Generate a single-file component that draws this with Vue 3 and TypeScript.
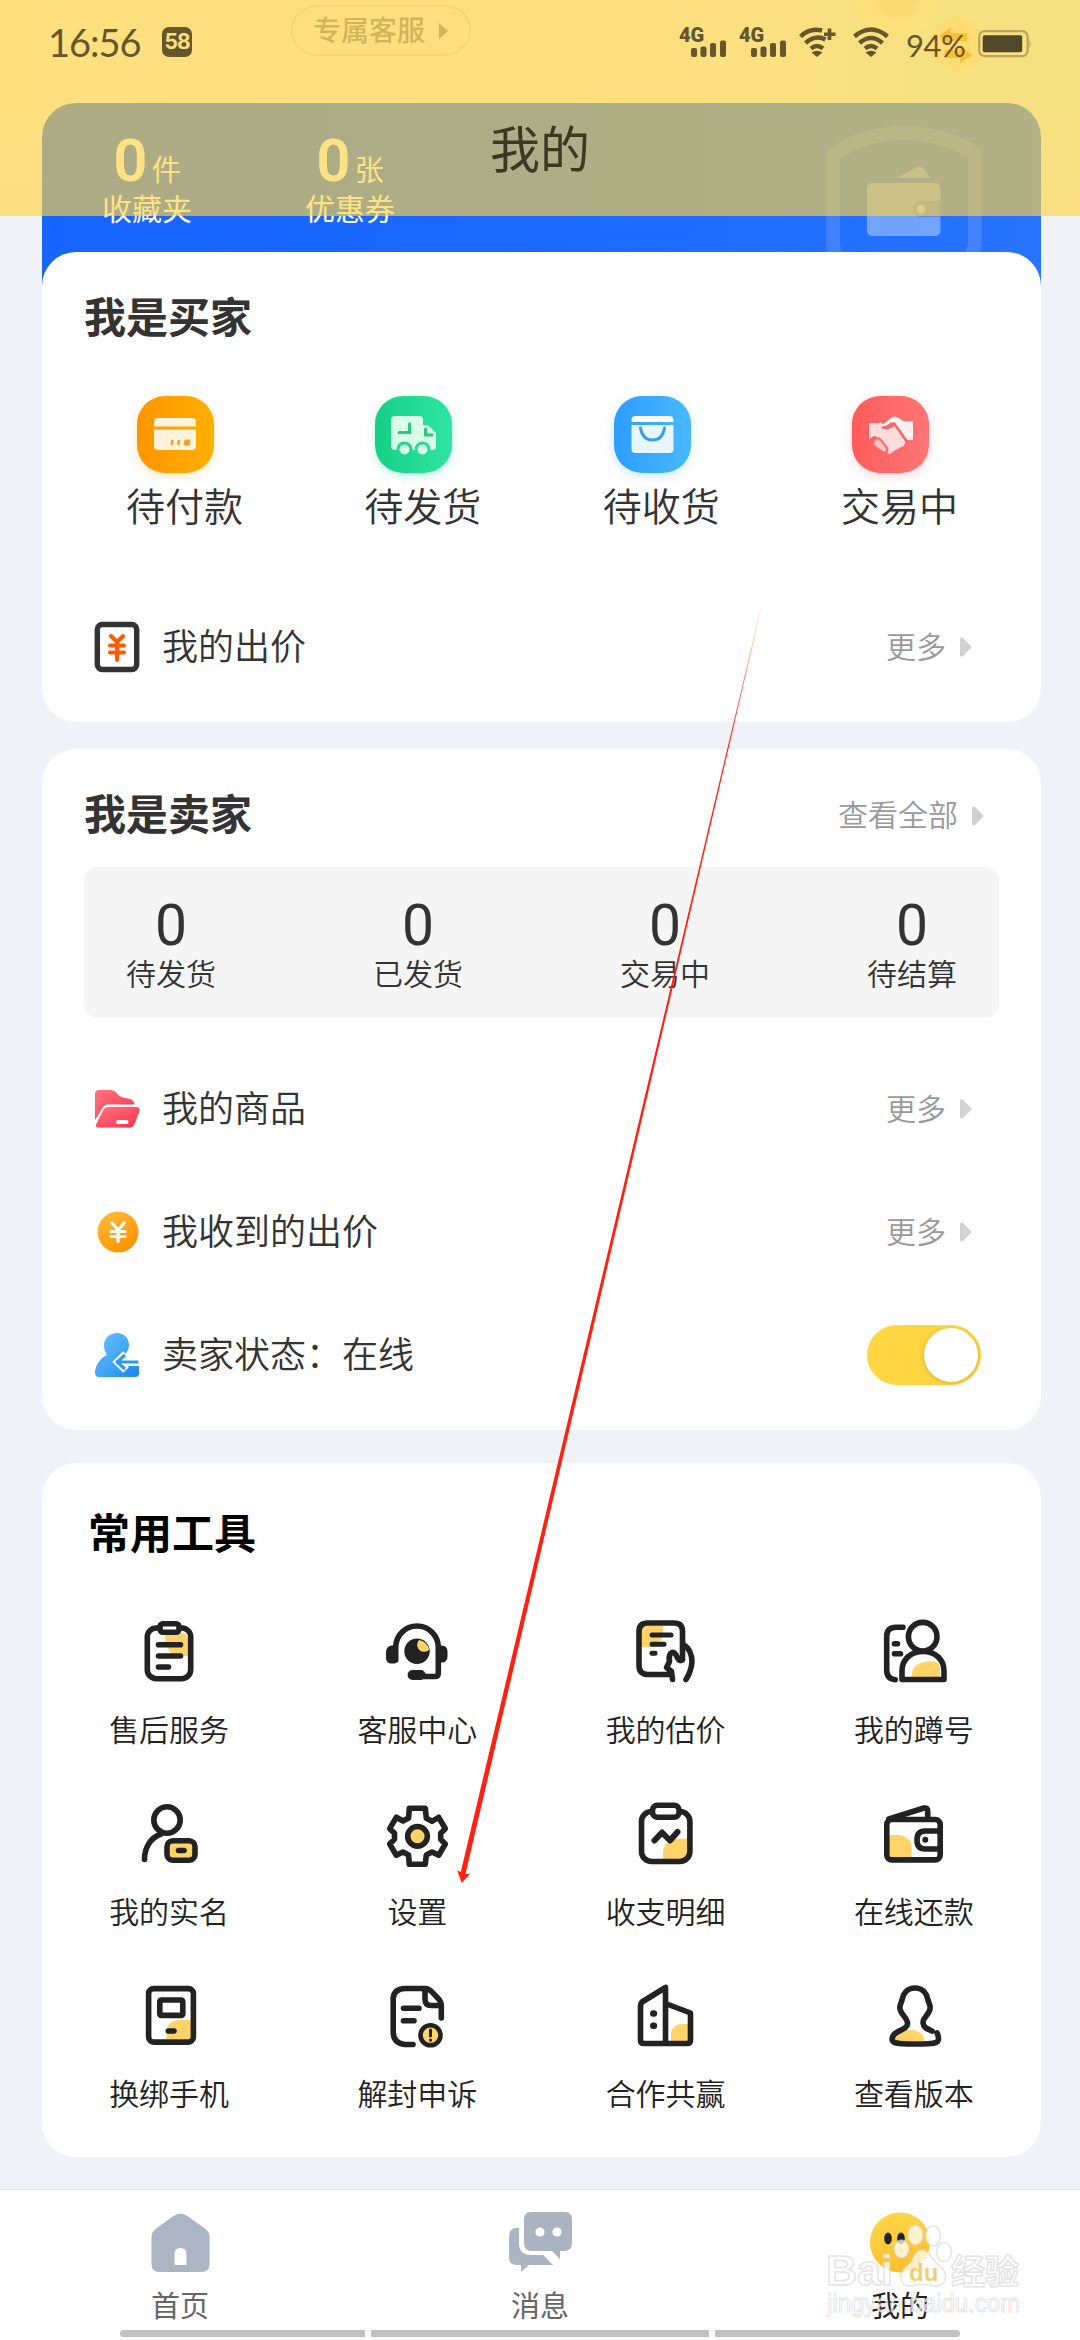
<script setup lang="ts">
interface Labeled {
  key: string
  label: string
}

const assets = [
  { value: 0, unit: '件', label: '收藏夹' },
  { value: 0, unit: '张', label: '优惠券' },
]

const orders: Labeled[] = [
  { key: 'pay', label: '待付款' },
  { key: 'ship', label: '待发货' },
  { key: 'receive', label: '待收货' },
  { key: 'deal', label: '交易中' },
]

const sellerStats = [
  { value: 0, label: '待发货' },
  { value: 0, label: '已发货' },
  { value: 0, label: '交易中' },
  { value: 0, label: '待结算' },
]

const tools: Labeled[] = [
  { key: 'after', label: '售后服务' },
  { key: 'service', label: '客服中心' },
  { key: 'estimate', label: '我的估价' },
  { key: 'account', label: '我的蹲号' },
  { key: 'realname', label: '我的实名' },
  { key: 'settings', label: '设置' },
  { key: 'bill', label: '收支明细' },
  { key: 'repay', label: '在线还款' },
  { key: 'phone', label: '换绑手机' },
  { key: 'appeal', label: '解封申诉' },
  { key: 'coop', label: '合作共赢' },
  { key: 'version', label: '查看版本' },
]

const signalBars = [
  { x: 12, h: 9 },
  { x: 21.5, h: 10.5 },
  { x: 31, h: 14 },
  { x: 41, h: 16.5 },
]
</script>

<template>
  <div class="screen">
    <header class="hero">
      <svg class="hero-coins" width="180" height="90" viewBox="0 0 180 90">
        <circle cx="58" cy="-8" r="44" fill="#fff6d8" opacity=".7" />
        <circle cx="58" cy="-2" r="22" fill="#efe4c0" opacity=".6" />
        <circle cx="117" cy="44" r="27" fill="#fff3cd" />
        <path d="M99 36l12-9v6h16v8h-16v5zM132 55l-12 8v-5h-15v-8h15v-5z" fill="#ff9c1a" />
      </svg>
      <div class="service-pill">
        <span>专属客服</span>
        <svg width="9" height="16" viewBox="0 0 9 16"><path d="M0 0l9 8-9 8z" fill="#7d7f80" /></svg>
      </div>
      <div class="wallet">
        <div v-for="a in assets" :key="a.label" class="asset">
          <div class="asset-value"><b>{{ a.value }}</b><span>{{ a.unit }}</span></div>
          <div class="asset-label">{{ a.label }}</div>
        </div>
        <svg class="shield" width="180" height="150" viewBox="815 115 180 150">
          <path d="M850 285Q833 262 833 240V154Q866 133 903.500 133T975 153V240Q974 262 950 280" fill="none" stroke="#fff" stroke-opacity=".13" stroke-width="14" />
          <path d="M897 178l20-11q4-2 7 2l6 9z" fill="#fff" fill-opacity=".33" />
          <rect x="867" y="183" width="73.500" height="53" rx="5" fill="#fff" fill-opacity=".36" />
          <path d="M941 201h-20q-8 0-8 8t8 8h20z" fill="#1c58d8" fill-opacity=".35" />
          <circle cx="921" cy="209" r="4.500" fill="#fff" fill-opacity=".5" />
        </svg>
      </div>
    </header>

    <section class="card buyer">
      <h2>我是买家</h2>
      <div class="orders">
        <div v-for="o in orders" :key="o.key" class="order">
          <div class="order-icon" :class="o.key">
            <svg v-if="o.key === 'pay'" width="77" height="77" viewBox="0 0 77 77">
              <path d="M17 30.500V26q0-4 4-4h34q4 0 4 4v4.500z" fill="#fff3dc" />
              <path d="M17 33.500h42V50q0 4-4 4H21q-4 0-4-4z" fill="#fff3e0" />
              <path d="M35.500 44l-1 5M42 44l-1 5" stroke="#f9a11b" stroke-width="2.600" />
              <path d="M47.500 43.500h6l-1 6h-6z" fill="#f9a11b" />
            </svg>
            <svg v-else-if="o.key === 'ship'" width="77" height="77" viewBox="0 0 77 77">
              <path d="M20 20h24q4 0 4 4v5h5l8 8v14q0 3-4 3H20q-4 0-4-4V24q0-4 4-4z" fill="#d9ffe6" />
              <path d="M24 36.500h10.500V28M50.500 33v6h6.500" fill="none" stroke="#25c888" stroke-width="3" stroke-linecap="round" />
              <circle cx="29.500" cy="53.500" r="6.500" fill="#d9ffe6" stroke="#1fd592" stroke-width="3" />
              <circle cx="47.500" cy="53.500" r="6.500" fill="#d9ffe6" stroke="#25dc99" stroke-width="3" />
            </svg>
            <svg v-else-if="o.key === 'receive'" width="77" height="77" viewBox="0 0 77 77">
              <path d="M17.500 26v-2q0-4 4-4H55q4.500 0 4.500 4v2z" fill="#fff" />
              <path d="M17.500 29h42v24q0 4-4 4h-34q-4 0-4-4z" fill="#e8f5ff" />
              <path d="M26.500 32q2 12 12 12t12-12" fill="none" stroke="#389fe8" stroke-width="3" stroke-linecap="round" />
            </svg>
            <svg v-else width="77" height="77" viewBox="0 0 77 77">
              <path d="M17 27h9.500q2-1 4 0c-3 5 1 8 7 4q4-2 6-1l10 16-2 4q-9 4-13 7.500-2 1-5-1.500L25 41q-3-3-8 3z" fill="#ffdcdc" />
              <path d="M28 30q6-4 11-8 4-3 8 0 3 3 6 3.500h8V44h-6.500L43 27q-3-2-7 1.500-5 3.500-8 1.500z" fill="#fff1f1" />
              <path d="M30.500 31q5 3 12-3L55 45.500" fill="none" stroke="#f96468" stroke-width="2.400" />
              <path d="M23 43q3-2 6 1l6 8q1 3-1 5-5-1-12-7-2-4 1-7z" fill="#ffc2c2" stroke="#ff6668" stroke-width="2" />
            </svg>
          </div>
          <span>{{ o.label }}</span>
        </div>
      </div>
      <div class="row">
        <svg class="row-icon" width="48" height="54" viewBox="0 0 48 54">
          <rect x="4.300" y="4.500" width="39.400" height="45" rx="5" fill="#fff" stroke="#333" stroke-width="5.400" />
          <path d="M18 16l6 6 6-6M24 22v18M17 25.500h14M17 32.500h14" fill="none" stroke="#ff5900" stroke-width="4" stroke-linecap="round" />
        </svg>
        <span class="row-label">我的出价</span>
        <span class="more">更多</span>
        <svg class="caret" width="12" height="20" viewBox="0 0 12 20"><path d="M0 1.500Q1.500-.5 3 1l8 8q1 1 0 2l-8 8q-1.500 1.500-3-.5z" fill="#d2d2d2" /></svg>
      </div>
    </section>

    <section class="card seller">
      <div class="head">
        <h2>我是卖家</h2>
        <span class="more">查看全部</span>
        <svg class="caret" width="12" height="20" viewBox="0 0 12 20"><path d="M0 1.500Q1.500-.5 3 1l8 8q1 1 0 2l-8 8q-1.500 1.500-3-.5z" fill="#d2d2d2" /></svg>
      </div>
      <div class="stats">
        <div v-for="s in sellerStats" :key="s.label" class="stat">
          <b>{{ s.value }}</b>
          <span>{{ s.label }}</span>
        </div>
      </div>
      <div class="row">
        <svg class="row-icon" width="48" height="54" viewBox="0 0 48 54">
          <defs>
            <linearGradient id="folder" x1="0" y1="0" x2="1" y2="1"><stop offset="0" stop-color="#ff7582" /><stop offset="1" stop-color="#ff3049" /></linearGradient>
          </defs>
          <path d="M2 38V12q0-4 4-4h12q3 0 5 2.500 3 4 7 5l7 1.500q4 1 4.500 5.500H15q-4 0-5.500 3.500z" fill="url(#folder)" />
          <path d="M15 25h28q4.500 0 3.500 4l-5 13q-1.500 3.500-5 3.500H5q-3 0-2-3L10 28.500Q11.500 25 15 25z" fill="url(#folder)" />
          <rect x="23" y="38" width="12.500" height="4" rx="2" fill="#fff" />
        </svg>
        <span class="row-label">我的商品</span>
        <span class="more">更多</span>
        <svg class="caret" width="12" height="20" viewBox="0 0 12 20"><path d="M0 1.500Q1.500-.5 3 1l8 8q1 1 0 2l-8 8q-1.500 1.500-3-.5z" fill="#d2d2d2" /></svg>
      </div>
      <div class="row">
        <svg class="row-icon" width="48" height="54" viewBox="0 0 48 54">
          <defs>
            <linearGradient id="coin" x1="0" y1="0" x2=".6" y2="1"><stop offset="0" stop-color="#ffbd3e" /><stop offset="1" stop-color="#ff9400" /></linearGradient>
          </defs>
          <circle cx="25" cy="27" r="20.500" fill="url(#coin)" />
          <path d="M19 18l6 7 6-7M25 25v11.500M18 26.500h14M18 31.500h14" fill="none" stroke="#fff" stroke-width="3.200" stroke-linecap="round" />
        </svg>
        <span class="row-label">我收到的出价</span>
        <span class="more">更多</span>
        <svg class="caret" width="12" height="20" viewBox="0 0 12 20"><path d="M0 1.500Q1.500-.5 3 1l8 8q1 1 0 2l-8 8q-1.500 1.500-3-.5z" fill="#d2d2d2" /></svg>
      </div>
      <div class="row">
        <svg class="row-icon" width="48" height="54" viewBox="0 0 48 54">
          <defs>
            <linearGradient id="user" x1="0" y1="0" x2="1" y2="1"><stop offset="0" stop-color="#6cc6ff" /><stop offset="1" stop-color="#1b88ea" /></linearGradient>
          </defs>
          <path d="M24 5c7 0 12 5.500 12 12 0 4-2 7-4 9l2 6h12v13q0 4-4 4H6q-4 0-4-4c0-7 5-15 12-18-2-3-3-6-3-10C11 10.500 17 5 24 5z" fill="url(#user)" />
          <path d="M33 26l-8 8 8 8M26 34h21" fill="none" stroke="#fff" stroke-width="8" />
          <path d="M32 27l-8 7 8 7M25 34h20.500" fill="none" stroke="#2d9bf0" stroke-width="3.200" stroke-linejoin="round" />
        </svg>
        <span class="row-label">卖家状态：在线</span>
        <span class="switch"><i></i></span>
      </div>
    </section>

    <section class="card tools">
      <h2>常用工具</h2>
      <div class="tool-grid">
        <div v-for="t in tools" :key="t.key" class="tool">
          <svg class="tool-icon" width="66" height="66" viewBox="0 0 66 66">
            <g v-if="t.key === 'after'">
              <path d="M29 15h16q7 0 7 7v16H40Q29 34 29 15z" class="y" />
              <rect x="11.300" y="10" width="43.400" height="50.700" rx="9" />
              <rect x="24" y="5.700" width="19" height="8.600" rx="3" fill="#fff" />
              <path d="M22.500 26.700h22M22.500 38h22M22.500 49h10" />
            </g>
            <g v-else-if="t.key === 'service'">
              <path d="M11.700 42V29.300a21.300 21.300 0 0 1 42.600 0V55q0 3.500-3.500 3.500H30" />
              <path d="M13.500 27.500v14q0 4-3.500 4H7.500q-5.500 0-5.500-6v-5q0-6 5.500-7zM53 27.500v17h4.500q6 0 6-6v-5q0-6-6-6z" class="k" />
              <rect x="23.600" y="52" width="18" height="10" rx="5" class="k" />
              <circle cx="33" cy="33.300" r="12.700" class="k" />
              <path d="M35 22a6.400 6.400 0 1 0 10.300 9.500Q43.500 24 35 22z" class="y" />
            </g>
            <g v-else-if="t.key === 'estimate'">
              <path d="M8 8h22v4q0 12-9 17H8z" class="y" />
              <path d="M38 56.500H15q-9 0-9-9V13.500q0-8.500 9-8.500h26q8.500 0 8.500 8.500V42q-3 2-5-2-3-8-7-4.500-2 3-1 8l-3 6 5 4 1 8" />
              <path d="M50 26q9 6 9 18-1 10-6 17.500" />
              <path d="M19 17h19M19 26.300h12M19 35.300h3" stroke-width="5" />
            </g>
            <g v-else-if="t.key === 'account'">
              <path d="M31 58.700q-1-13 13.500-15T59 50v9z" class="y" />
              <path d="M22 9.300h-7q-9.300 0-9.300 9V52q0 9 8.500 9.700M13.500 25.700h3M13.500 35.700h6" />
              <circle cx="41.700" cy="18.700" r="14.300" />
              <path d="M21 61.500V53c0-11 8-19.500 21-19.500S63 42 63 53v8.500z" />
            </g>
            <g v-else-if="t.key === 'realname'">
              <circle cx="31" cy="20" r="13.200" />
              <path d="M25 34C14 38 8.500 48 8.500 59.500" />
              <rect x="31" y="40.700" width="28" height="19.600" rx="6" fill="#ffd368" />
              <path d="M42.500 50.500h5.500" />
            </g>
            <g v-else-if="t.key === 'settings'" transform="translate(0 3)">
              <path d="M25.300 5.300h16l1 10 5.700 3 6.700-4 6.600 11.400-4.600 4.600v6l4.600 4.700-6.600 11.300-6.700-3.300-5.700 3-1 9.300h-16l-.7-9.300-5.600-3-6.700 3.300L5.700 41l4.800-4.700v-6l-4.800-4.600 6.600-11.400 6.700 3.700 5.600-3z" />
              <circle cx="33.500" cy="33.300" r="9.800" fill="#ffd368" />
            </g>
            <g v-else-if="t.key === 'bill'" transform="translate(0 3)">
              <path d="M30 56V47q3-11 15-11.300h10V56z" class="y" />
              <rect x="8.500" y="8.500" width="48.400" height="50" rx="10" />
              <rect x="19.500" y="2.200" width="26.600" height="12" rx="5" fill="#fff" />
              <path d="M21.500 37.500l7.500-8 8 8 7.500-8.500" stroke-width="6" />
            </g>
            <g v-else-if="t.key === 'repay'" transform="translate(0 3)">
              <path d="M8 32h10q12 2 12.700 12v11H8z" class="y" />
              <rect x="5.800" y="16.500" width="53.400" height="40.400" rx="5" />
              <path d="M8 16L43 5q3.700-.5 3.700 3v8M59 28H44q-8 0-8 9t8 9h15" />
              <circle cx="44.300" cy="36.700" r="3" class="k" />
            </g>
            <g v-else-if="t.key === 'phone'">
              <path d="M30.300 57V52q0-14 14-14H55v19z" class="y" />
              <rect x="12.600" y="6.600" width="44.800" height="53.500" rx="5" />
              <rect x="23.800" y="18" width="23" height="15.400" rx="1.500" fill="#fff" />
              <path d="M32.300 49H38" />
            </g>
            <g v-else-if="t.key === 'appeal'">
              <path d="M29 62.500h-8Q9.200 61 9.200 50V16Q10 7 21 6.500h20q4 0 8 4.500l6.500 7q2 3 1.800 6v12M41 8v9q0 6.500 6 6.500h9M19.500 26.300h15.500M19.500 38.700H30" />
              <circle cx="46.500" cy="53.300" r="10" fill="#ffd368" stroke-width="4.600" />
              <path d="M46.500 48v6M46.500 58v.2" stroke-width="3" />
            </g>
            <g v-else-if="t.key === 'coop'">
              <path d="M38 59V50q3-8 11-8h7v17z" class="y" />
              <path d="M11 61.500q-3.500 0-3.500-3.500V24q0-2 1.500-4L32.500 5.500v56zM32.500 21.500L57.500 31v27q0 3.500-3.500 3.500H11" />
              <path d="M20.300 31.500h.6M20.300 43.700h.6" stroke-width="6.500" />
            </g>
            <g v-else>
              <path d="M14 59q-1-5 3-8 11-6 21-1 6 4 5 9z" class="y" />
              <path d="M51 49c-4-2-8.500-3-9-8-.5-5 6-8 7-14 .7-4-1-5-2-9C46 12 42 6 34 6s-12 6-13 12c-1 4-2.700 5-2 9 1 6 8 9 7.500 15-.5 7-15 6-15.500 15 0 4 3 5 23 5s23.500-1 23.500-5q0-4-1.500-6" />
            </g>
          </svg>
          <span>{{ t.label }}</span>
        </div>
      </div>
    </section>

    <nav class="tabbar">
      <div class="tab">
        <svg width="66" height="64" viewBox="0 0 66 64">
          <path d="M4 25q0-5 4-8L26 4q7-5 14 0l18 13q4 3 4 8v27q0 8-8 8H12q-8 0-8-8z" fill="#abb5c3" transform="translate(.5 1)" />
          <path d="M27.500 54V43q0-6 6-6t6 6v11z" fill="#fff" />
        </svg>
        <span>首页</span>
      </div>
      <div class="tab">
        <svg width="66" height="64" viewBox="0 0 66 64">
          <path d="M8 17q-6 1-6 9v20q0 8 8 8h4v7l8-7h24L36 44H24q-12 0-12-12V17z" fill="#a9b5c2" />
          <path d="M24 1h34q7 0 7 8v23q0 8-8 8h-4v8l-8-8H25q-8 0-8-8V9q0-8 7-8z" fill="#abb3c0" />
          <circle cx="33" cy="21" r="4.600" fill="#fff" /><circle cx="50" cy="21" r="4.600" fill="#fff" />
        </svg>
        <span>消息</span>
      </div>
      <div class="tab active">
        <svg width="66" height="64" viewBox="0 0 66 64">
          <defs>
            <linearGradient id="face" x1="0" y1="0" x2=".3" y2="1"><stop offset="0" stop-color="#ffd94a" /><stop offset="1" stop-color="#fdc02b" /></linearGradient>
          </defs>
          <circle cx="33" cy="31.500" r="30" fill="url(#face)" />
          <ellipse cx="21" cy="27.500" rx="3.800" ry="6" fill="#222" /><ellipse cx="34" cy="27.500" rx="3.800" ry="6" fill="#222" />
        </svg>
        <span>我的</span>
      </div>
    </nav>
    <div class="gesture"><i></i><i class="wide"></i><i></i></div>

    <div class="topbar">
      <div class="status">
        <span class="time">16:56</span>
        <span class="badge">58</span>
        <span class="spacer"></span>
        <svg v-for="n in 2" :key="n" class="signal" width="47" height="30" viewBox="0 0 47 30">
          <text x="0" y="15" class="net">4G</text>
          <rect v-for="b in signalBars" :key="b.x" :x="b.x" :y="30 - b.h" width="6" :height="b.h" rx="2" fill="#65562b" />
        </svg>
        <svg class="wifi-plus" width="37" height="30" viewBox="0 0 37 30">
          <path d="M1.500 9.500Q11 .5 23 3.500M6.500 16q10-9 20-3.500M12 21.500q6-5 12 0" fill="none" stroke="#65562b" stroke-width="4.400" />
          <path d="M12.500 25.500q5.500-3.500 11 0L18 30z" fill="#65562b" />
          <path d="M30.500 1.500v11.500M25 7.200h11.500" stroke="#65562b" stroke-width="3.600" />
        </svg>
        <svg class="wifi" width="36" height="30" viewBox="0 0 36 30">
          <path d="M1.500 9.500q16.500-14 33 0M6.500 16q11.500-10 23 0M12 21.500q6-5 12 0" fill="none" stroke="#65562b" stroke-width="4.400" />
          <path d="M12.500 25.500q5.500-3.500 11 0L18 30z" fill="#65562b" />
        </svg>
        <span class="percent">94%</span>
        <svg class="battery" width="54" height="28" viewBox="0 0 54 28">
          <rect x="1.200" y="1.200" width="48.500" height="25" rx="5.500" fill="none" stroke="#b7a461" stroke-width="2.200" />
          <rect x="4.700" y="5.200" width="39.500" height="17" rx="2" fill="#51482a" />
          <path d="M51.500 9.500q2.300 4 0 8.500z" fill="#b7a461" />
        </svg>
      </div>
      <h1>我的</h1>
    </div>

    <svg class="pointer" width="320" height="1290" viewBox="450 600 320 1290">
      <defs>
        <linearGradient id="fade" gradientUnits="userSpaceOnUse" x1="761" y1="608" x2="730" y2="745"><stop offset="0" stop-color="#ff2010" stop-opacity=".1" /><stop offset="1" stop-color="#ff2010" /></linearGradient>
      </defs>
      <path d="M760.700 608L460.800 1872l-3.600-1.500 4.500 12.500 8.500-9.500-4.800.8L761.400 608z" fill="url(#fade)" />
    </svg>

    <svg class="watermark" width="210" height="110" viewBox="820 2218 210 110">
      <g class="mark">
        <text x="826" y="2285" class="wm-big">Bai</text>
        <ellipse cx="901.500" cy="2249" rx="7.500" ry="9" /><ellipse cx="915.500" cy="2235" rx="7.500" ry="10" />
        <ellipse cx="933" cy="2236" rx="7.500" ry="10" /><ellipse cx="944" cy="2252" rx="7.500" ry="9.500" />
        <path d="M922 2250q6 0 10 8 4 5 10 10 5 6 3 12-3 7-11 6-12-3-22 0-10 1-11-8-1-7 7-13 3-2 5-7 3-8 9-8z" />
        <text x="951" y="2284" class="wm-cjk">经验</text>
      </g>
      <text x="909" y="2281" class="wm-du">du</text>
      <text x="827" y="2312" class="wm-url" textLength="193" lengthAdjust="spacingAndGlyphs">jingyan.baidu.com</text>
    </svg>
  </div>
</template>

<style>
body {
  margin: 0;
  background: #f0f2f7;
}
</style>

<style scoped>
.screen {
  position: relative;
  display: flex;
  flex-direction: column;
  width: 1080px;
  height: 2340px;
  overflow: hidden;
  background: #f0f2f7;
  color: #333;
  font-family: Roboto, "Noto Sans CJK SC", sans-serif;
  font-weight: 350;
}
svg {
  display: block;
  flex: none;
  overflow: visible;
}
h1, h2 {
  margin: 0;
}

/* hero */
.hero {
  position: relative;
  flex: none;
  display: flex;
  flex-direction: column;
  align-items: flex-start;
  height: 252px;
  padding: 5px 39px 0 42px;
  box-sizing: border-box;
  background: linear-gradient(90deg, #fffbe9 0, #fff6f0 20%, #fff6f0 62%, #e8fbf3 85%, #e8fbf3 100%) 0 0 / 100% 216px no-repeat;
}
.hero::before {
  content: "";
  position: absolute;
  inset: 110px 0 0;
  background: linear-gradient(rgba(240, 242, 247, 0), #f0f2f7 75%);
}
.hero-coins {
  position: absolute;
  left: 840px;
  top: 0;
}
.service-pill {
  display: flex;
  align-items: center;
  width: 180px;
  height: 51px;
  margin-left: 249px;
  padding-left: 20px;
  box-sizing: border-box;
  border: 2px solid #e6dcc4;
  border-radius: 26px;
  color: #7d7f80;
  font-size: 28px;
  font-weight: 500;
  line-height: 47px;
}
.service-pill span {
  padding-top: 2px;
}
.service-pill svg {
  margin-left: 14px;
}
.wallet {
  position: relative;
  flex: none;
  display: flex;
  gap: 113px;
  width: 999px;
  height: 190px;
  margin-top: 47px;
  padding: 29px 0 0 60px;
  box-sizing: border-box;
  border-radius: 34px 34px 0 0;
  background: linear-gradient(90deg, #1765ff, #1b69ff 50%, #2873ff);
  color: #fff;
  font-weight: 400;
}
.asset {
  width: 90px;
  text-align: center;
}
.asset-value {
  display: flex;
  justify-content: center;
  align-items: baseline;
  height: 58px;
  line-height: 58px;
}
.asset-value b {
  font-size: 60px;
  font-weight: 600;
}
.asset-value span {
  margin-left: 4px;
  font-size: 29px;
}
.asset-label {
  margin-top: 2px;
  font-size: 30px;
  line-height: 36px;
  white-space: nowrap;
}
.shield {
  position: absolute;
  left: 773px;
  top: 12px;
}

/* cards */
.card {
  position: relative;
  flex: none;
  width: 999px;
  margin-left: 42px;
  box-sizing: border-box;
  border-radius: 34px;
  background: #fefefe;
}
.card h2 {
  font-size: 42px;
  font-weight: 700;
  line-height: 60px;
}
.buyer {
  height: 470px;
  padding-top: 37px;
}
.buyer h2 {
  margin-left: 42px;
}
.orders {
  display: flex;
  justify-content: space-between;
  margin: 47px 83px 0 84px;
}
.order span {
  display: block;
  margin-top: 12px;
  font-size: 39px;
  line-height: 46px;
}
.order-icon {
  width: 77px;
  height: 77px;
  margin-left: 11px;
  border-radius: 28px;
}
.order-icon.pay {
  background: linear-gradient(90deg, #ff9500, #ffb000);
  box-shadow: 0 3px 8px rgba(255, 170, 0, .25);
}
.order-icon.ship {
  background: linear-gradient(90deg, #15cf86, #30e5a4);
  box-shadow: 0 3px 8px rgba(40, 224, 160, .3);
}
.order-icon.receive {
  background: linear-gradient(90deg, #2d9dff, #48b9ff);
  box-shadow: 0 3px 8px rgba(60, 180, 255, .28);
}
.order-icon.deal {
  background: linear-gradient(90deg, #ff5b5b, #ff7676);
  box-shadow: 0 3px 8px rgba(255, 110, 110, .28);
}
.row {
  display: flex;
  align-items: center;
  height: 123px;
  padding: 0 69px 0 51px;
}
.buyer .row {
  margin-top: 54px;
}
.row-label {
  flex: 1;
  margin-left: 21px;
  padding-top: 2px;
  font-size: 36px;
  line-height: 40px;
}
.more {
  padding-top: 2px;
  color: #999;
  font-size: 30px;
  line-height: 36px;
}
.caret {
  margin-left: 14px;
}

/* seller */
.seller {
  height: 681px;
  margin-top: 27px;
  padding-top: 37px;
}
.head {
  display: flex;
  align-items: center;
  height: 60px;
  padding: 0 57px 0 42px;
}
.head h2 {
  flex: 1;
}
.head .more {
  padding-top: 0;
}
.stats {
  display: flex;
  justify-content: space-between;
  height: 151px;
  margin: 21px 42px 29px;
  padding: 31px 42px 0;
  box-sizing: border-box;
  border-radius: 14px;
  background: #f5f5f5;
}
.stat {
  display: flex;
  flex-direction: column;
  align-items: center;
}
.stat b {
  font-size: 57px;
  font-weight: 400;
  line-height: 56px;
}
.stat span {
  margin-top: 3px;
  font-size: 30px;
  line-height: 36px;
}
.seller .row:last-child {
  padding-right: 60px;
}
.switch {
  display: flex;
  justify-content: flex-end;
  width: 114px;
  height: 60px;
  padding: 3px;
  box-sizing: border-box;
  border-radius: 30px;
  background: #ffd541;
}
.switch i {
  width: 54px;
  height: 54px;
  border-radius: 50%;
  background: #fff;
  box-shadow: 0 1px 4px rgba(120, 90, 0, .3);
}

/* tools */
.tools {
  height: 694px;
  margin-top: 33px;
  padding-top: 42px;
}
.tools h2 {
  margin-left: 46px;
  color: #000;
}
.tool-grid {
  display: grid;
  grid-template-columns: repeat(4, 1fr);
  grid-auto-rows: 182px;
  margin: 53px 3px 0;
}
.tool {
  display: flex;
  flex-direction: column;
  align-items: center;
  color: #222;
}
.tool span {
  margin-top: 29px;
  font-size: 30px;
  line-height: 36px;
}
.tool-icon {
  fill: none;
  stroke: #222;
  stroke-width: 5.6;
  stroke-linecap: round;
  stroke-linejoin: round;
}
.y {
  fill: #ffd368;
  stroke: none;
}
.k {
  fill: #222;
  stroke: none;
}

/* tab bar */
.tabbar {
  flex: none;
  display: flex;
  height: 140px;
  margin-top: 32px;
  border-top: 1px solid #e1e3e7;
  background: #fefefe;
}
.tab {
  flex: 1;
  display: flex;
  flex-direction: column;
  align-items: center;
  padding-top: 21px;
  color: #666;
  font-size: 29px;
  font-weight: 400;
  line-height: 36px;
}
.tab span {
  margin-top: 14px;
}
.tab.active {
  color: #222;
}
.gesture {
  flex: 1;
  display: flex;
  justify-content: center;
  align-items: flex-start;
  gap: 6px;
  background: #fefefe;
}
.gesture i {
  width: 245px;
  height: 7px;
  background: #c0c0c0;
}
.gesture i:first-child {
  border-radius: 4px 0 0 4px;
}
.gesture i:last-child {
  border-radius: 0 4px 4px 0;
}
.gesture i.wide {
  width: 338px;
}

/* translucent navigation bar over the scrolled page */
.topbar {
  position: absolute;
  inset: 0 0 auto;
  height: 216px;
  background: rgba(253, 210, 68, .65);
}
.status {
  display: flex;
  align-items: center;
  height: 84px;
  padding: 0 48px;
  color: #65562b;
  font-family: Lato, sans-serif;
  font-weight: 400;
}
.time {
  width: 96px;
  font-size: 38px;
  letter-spacing: -1px;
}
.badge {
  width: 30px;
  height: 30px;
  margin-left: 18px;
  border-radius: 7px;
  background: #65562b;
  color: #ffe07f;
  font-family: Inter, sans-serif;
  font-size: 21px;
  font-weight: 700;
  letter-spacing: -1px;
  line-height: 30px;
  text-align: center;
}
.spacer {
  flex: 1;
}
.signal {
  margin-right: 13px;
}
.net {
  font-family: Roboto, sans-serif;
  font-size: 20px;
  font-weight: 900;
  fill: #65562b;
}
.wifi-plus, .wifi {
  margin-right: 17px;
}
.percent {
  width: 62px;
  margin-right: 10px;
  padding-top: 6px;
  font-size: 31px;
  letter-spacing: -.5px;
}
.battery {
  margin-top: 3px;
}
.topbar h1 {
  margin-top: 32px;
  color: #3b3824;
  font-size: 50px;
  font-weight: 400;
  line-height: 70px;
  text-align: center;
}
.pointer {
  position: absolute;
  left: 450px;
  top: 600px;
}
.watermark {
  position: absolute;
  left: 820px;
  top: 2218px;
}
.mark {
  fill: rgba(255, 255, 255, .75);
  stroke: rgba(210, 210, 210, .6);
  stroke-width: 1.5;
}
.wm-big {
  font-family: "Liberation Sans", sans-serif;
  font-size: 43px;
  font-weight: 700;
}
.wm-cjk {
  font-family: "Noto Sans CJK SC", sans-serif;
  font-size: 34px;
  font-weight: 700;
}
.wm-du {
  fill: rgba(235, 190, 70, .75);
  font-family: "Liberation Sans", sans-serif;
  font-size: 24px;
  font-weight: 700;
}
.wm-url {
  fill: rgba(255, 255, 255, .75);
  stroke: rgba(205, 205, 205, .55);
  stroke-width: 1;
  font-family: "Liberation Sans", sans-serif;
  font-size: 26px;
}
</style>
